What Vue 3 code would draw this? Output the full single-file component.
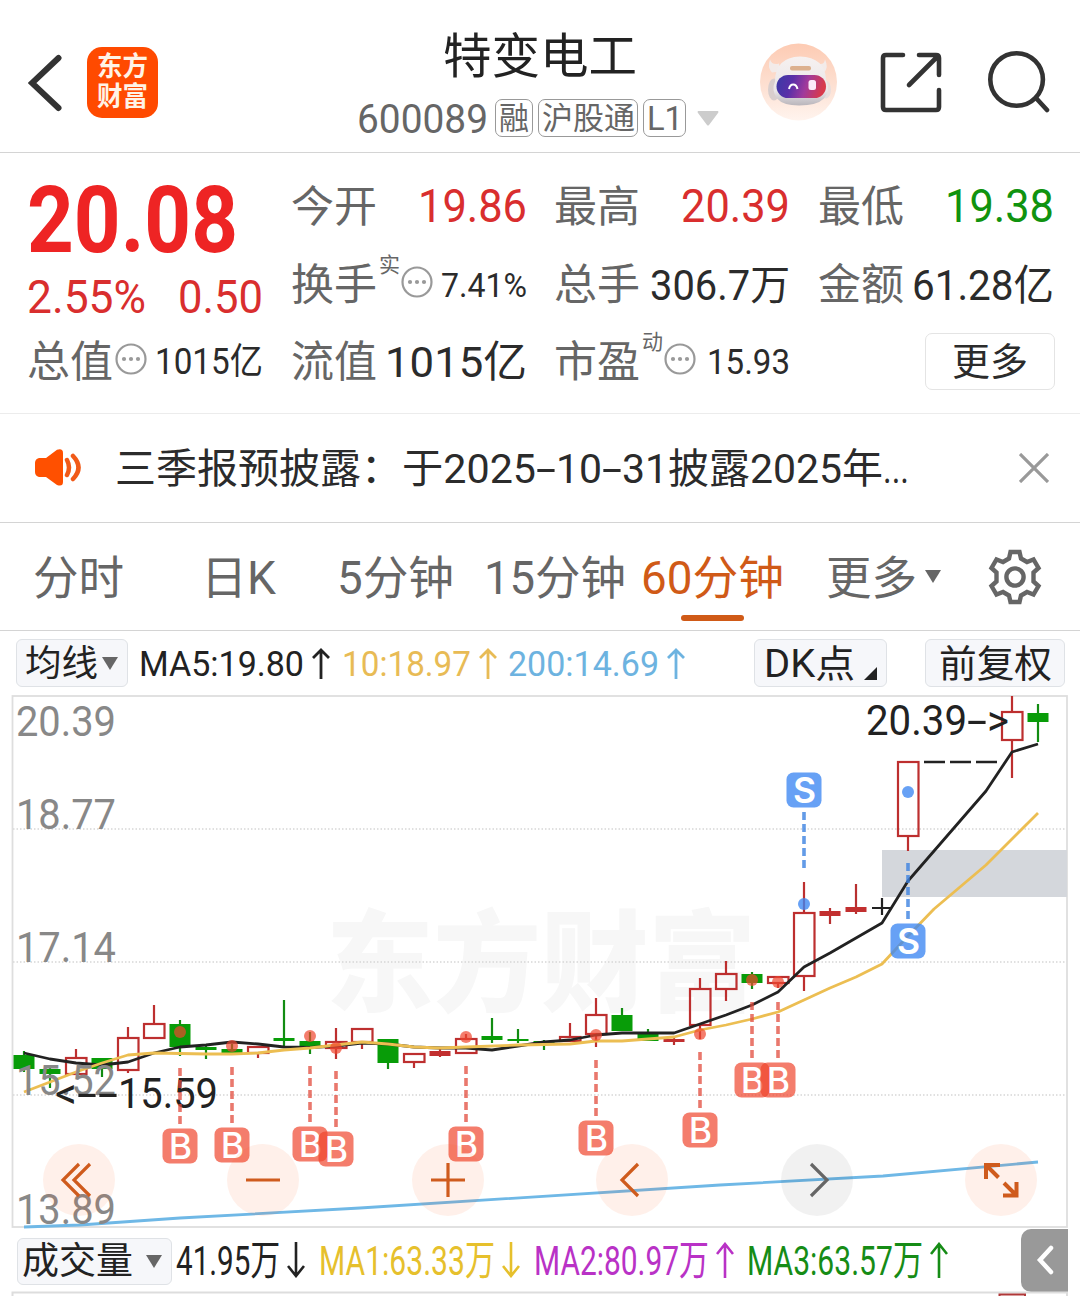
<template>
  <div class="stock-page">
    <header class="header">
      <svg class="back" width="34" height="58" viewBox="28 54 34 58">
        <path d="M58.500 58 L32 83 L58.500 108" fill="none" stroke="#333" stroke-width="6" stroke-linecap="round" />
      </svg>
      <div class="logo">
        <FitText text="东方" :w="51" :size="27" weight="700" />
        <FitText text="财富" :w="51" :size="27" weight="700" />
      </div>
      <div class="title">
        <FitText class="name" text="特变电工" :w="194" :size="48" />
        <div class="code-line">
          <FitText text="600089" :w="131" :size="41" />
          <span class="tag tag-rong"><FitText text="融" :w="30" :size="31" /></span>
          <span class="tag tag-hgt"><FitText text="沪股通" :w="93" :size="31" /></span>
          <span class="tag tag-l1"><FitText text="L1" :w="36" :size="33" /></span>
          <svg class="code-caret" width="22" height="15"><path d="M1 0 H21 Q22 1 21 2 L12 14 Q11 15 10 14 L1 2 Q0 1 1 0Z" fill="#ccc" /></svg>
        </div>
      </div>
      <svg class="robot" width="78" height="78" viewBox="760 43.500 78 78">
        <defs>
          <linearGradient id="peach" x1="0" y1="0" x2="0" y2="1">
            <stop offset="0" stop-color="#fdcbb3" />
            <stop offset=".55" stop-color="#fde0d2" />
            <stop offset="1" stop-color="#fff4ee" />
          </linearGradient>
          <linearGradient id="visor" x1="0" y1="0" x2="1" y2=".15">
            <stop offset="0" stop-color="#3a3aa6" />
            <stop offset=".35" stop-color="#5a2fa8" />
            <stop offset=".65" stop-color="#a03a9c" />
            <stop offset="1" stop-color="#d83a4c" />
          </linearGradient>
          <linearGradient id="shell" x1="0" y1="0" x2="0" y2="1">
            <stop offset="0" stop-color="#f6f1f0" />
            <stop offset=".7" stop-color="#eae6e8" />
            <stop offset="1" stop-color="#b9b5bb" />
          </linearGradient>
        </defs>
        <circle cx="798.500" cy="82.500" r="38.500" fill="url(#peach)" />
        <path d="M770 60 Q767 68 772 73 L780 72 L779 64 Q772 66 770 60Z M825 60 Q829 68 824 73 L815 71 L818 64 Q824 66 825 60Z" fill="#f3ebe9" />
        <ellipse cx="774" cy="90" rx="6" ry="11" fill="#d9cecd" />
        <ellipse cx="826" cy="90" rx="5" ry="9" fill="#e9dedd" />
        <path d="M775 82 Q775 58 800 57 Q825 58 826 80 Q831 91 824 99 Q817 106 799 106 Q783 106 777 99 Q771 91 775 82Z" fill="url(#shell)" />
        <rect x="790" y="66.500" width="21" height="4.500" rx="2" fill="#dcb08e" />
        <rect x="776.500" y="75.500" width="49.500" height="23" rx="11.500" fill="url(#visor)" />
        <path d="M789 89.500 Q790 85 793.200 85 Q796.500 85 797.500 89.500" fill="none" stroke="#fff" stroke-width="2" />
        <rect x="808.500" y="80.500" width="7.500" height="10" rx="2.500" fill="#fbe9fa" />
      </svg>
      <svg class="share" width="62" height="62" viewBox="880 52 62 62" fill="none" stroke="#333" stroke-width="4.600" stroke-linecap="round">
        <path d="M903 55 H886 Q883 55 883 58 V107 Q883 110 886 110 H936 Q939 110 939 107 V90 M919 55 H936 Q939 55 939 58 V75 M938 56 L909 85" />
      </svg>
      <svg class="search" width="64" height="64" viewBox="986 50 64 64" fill="none" stroke="#333" stroke-width="4.600" stroke-linecap="round">
        <circle cx="1016.600" cy="79.500" r="26.300" />
        <path d="M1036 98 L1047 110" />
      </svg>
    </header>

    <section class="quotes">
      <div class="col">
        <div class="line price-line"><FitText class="price" text="20.08" :w="211" :size="92" weight="700" /></div>
        <div class="line pct-line red">
          <FitText text="2.55%" :w="119" :size="46" />
          <FitText text="0.50" :w="85" :size="46" />
        </div>
        <QuoteLine :q="totalValue" />
      </div>
      <div v-for="(col, i) in quoteCols" :key="i" class="col">
        <QuoteLine v-for="q in col" :key="q.label" :q="q" />
        <button v-if="i === 2" class="more-btn"><FitText text="更多" :w="76" :size="38" /></button>
      </div>
    </section>

    <section class="notice">
      <svg width="48" height="40" viewBox="34 448 48 40">
        <path d="M39 458 H46 L57 449.800 Q63 448 63 453 V482 Q63 487 57 485 L46 477 H39 Q35 476 35 472 V463 Q35 459 39 458Z" fill="#ff5000" />
        <path d="M67 460 Q71 467.500 67 475 M73 456 Q84 467.500 73 479" fill="none" stroke="#f15a18" stroke-width="4.500" stroke-linecap="round" />
      </svg>
      <FitText class="notice-head" text="三季报预披露：" :w="287" :size="41" />
      <FitText text="于2025" :w="134" :size="41" />
      <FitText text="-" :w="20" :size="41" />
      <FitText text="10" :w="46" :size="41" />
      <FitText text="-" :w="20" :size="41" />
      <FitText text="31披露2025年" :w="261" :size="41" />
      <FitText text="..." :w="26" :size="41" />
      <svg class="close" width="30" height="30"><path d="M1 1 L29 29 M29 1 L1 29" stroke="#999" stroke-width="3.200" /></svg>
    </section>

    <nav class="tabs">
      <div v-for="t in tabs" :key="t.text" class="tab" :class="[t.cls, { active: t.active }]">
        <FitText :text="t.text" :w="t.w" :size="46" />
      </div>
      <svg class="tab-caret" width="16" height="13"><path d="M0 0H16L8 13Z" fill="#666" /></svg>
      <svg class="gear" width="54" height="56" viewBox="-27 -28 54 56" fill="none" stroke="#666" stroke-width="4.400">
        <path d="M-4.500 -25 H4.500 L6 -18.500 L12 -15 L18.500 -17.500 L23.500 -9 L18.500 -4.500 V4.500 L23.500 9 L18.500 17.500 L12 15 L6 18.500 L4.500 25 H-4.500 L-6 18.500 L-12 15 L-18.500 17.500 L-23.500 9 L-18.500 4.500 V-4.500 L-23.500 -9 L-18.500 -17.500 L-12 -15 L-6 -18.500Z" />
        <circle r="8.600" />
      </svg>
    </nav>

    <div class="legend">
      <button class="chip ma-chip">
        <FitText text="均线" :w="73" :size="36.5" />
        <svg width="16" height="13"><path d="M0 0H16L8 13Z" fill="#666" /></svg>
      </button>
      <div v-for="m in maLegend" :key="m.text" class="ma" :class="m.cls">
        <FitText :text="m.text" :w="m.w" :size="35" />
        <svg width="18" height="31"><path d="M9 31V2M1 10L9 2L17 10" fill="none" stroke="currentColor" stroke-width="2.800" /></svg>
      </div>
      <button class="chip dk-chip">
        <FitText text="DK点" :w="91" :size="38" />
        <svg width="13" height="13"><path d="M13 0V13H0Z" fill="#222" /></svg>
      </button>
      <button class="chip fq-chip"><FitText text="前复权" :w="113" :size="37.5" /></button>
    </div>

    <div class="chart">
      <svg width="1080" height="534" viewBox="0 695 1080 534">
        <text x="326" y="1003" class="watermark" textLength="430" lengthAdjust="spacingAndGlyphs">东方财富</text>
        <path d="M13 829H1067M13 962H1067M13 1095H1067" class="grid" />
        <rect x="12.500" y="696" width="1054.500" height="531" class="frame" />
        <rect x="882" y="850" width="185" height="47" fill="#d4d7dc" />

        <g v-for="c in candles" :key="c.x" :class="c.kind" stroke-width="2.200">
          <path v-if="c.kind === 'flat'" :d="`M${c.x - 10} ${c.o}H${c.x + 10}M${c.x} ${c.h}V${c.l}`" />
          <template v-else>
            <path :d="`M${c.x} ${c.h}V${c.o}M${c.x} ${c.c}V${c.l}`" />
            <rect v-if="c.kind === 'up'" :x="c.x - 10" :y="c.o + 1" width="20.500" :height="Math.max(c.c - c.o - 2, 1)" />
            <rect v-else :x="c.x - 10.5" :y="c.o" width="21" :height="c.c - c.o" stroke="none" />
          </template>
        </g>
        <path d="M924 762H945M950 762H971M976 762H997" stroke="#222" stroke-width="2.400" />

        <polyline :points="ma5" class="line" stroke="#222" />
        <polyline :points="ma10" class="line" stroke="#ecbe52" />
        <polyline :points="ma200" class="line" stroke="#6fb8e6" />

        <text v-for="l in yLabels" :key="l.t" x="16" :y="l.y" class="axis" textLength="100" lengthAdjust="spacingAndGlyphs">{{ l.t }}</text>

        <g class="extreme">
          <text x="866" y="734.500" textLength="101" lengthAdjust="spacingAndGlyphs">20.39</text>
          <text x="967" y="734.500" textLength="20" lengthAdjust="spacingAndGlyphs">-</text>
          <text x="987" y="734.500" textLength="22" lengthAdjust="spacingAndGlyphs">&gt;</text>
          <text x="55" y="1108" textLength="22" lengthAdjust="spacingAndGlyphs">&lt;</text>
          <text x="77" y="1108" textLength="20" lengthAdjust="spacingAndGlyphs">-</text>
          <text x="98" y="1108" textLength="20" lengthAdjust="spacingAndGlyphs">-</text>
          <text x="118" y="1108" textLength="100" lengthAdjust="spacingAndGlyphs">15.59</text>
        </g>

        <g v-for="m in marks" :key="m.x" :class="m.t === 'B' ? 'buy' : 'sell'">
          <circle :cx="m.x" :cy="m.dot" r="6" />
          <path :d="m.below ? `M${m.x} ${m.y + 22}v56` : `M${m.x} ${m.y - 78}v56`" class="stem" />
          <rect :x="m.x - 17.5" :y="m.y - 17.5" width="35" height="35" rx="7" />
          <text :x="m.x + 0.5" :y="m.y + 13">{{ m.t }}</text>
        </g>
      </svg>
      <div class="controls">
        <button v-for="b in controls" :key="b.id" :class="[b.id, { off: b.id === 'next' }]">
          <svg width="72" height="72" viewBox="-36 -36 72 72"><path :d="b.d" /></svg>
        </button>
      </div>
    </div>

    <div class="volume">
      <button class="chip vol-chip">
        <FitText text="成交量" :w="111" :size="37" />
        <svg width="16" height="13"><path d="M0 0H16L8 13Z" fill="#666" /></svg>
      </button>
      <div v-for="v in volLegend" :key="v.text" class="vol" :class="v.cls">
        <FitText :text="v.text" :w="v.w" :size="41" />
        <svg width="18" height="36">
          <path :d="v.up ? 'M9 36V2M1 12L9 2L17 12' : 'M9 0V34M1 24L9 34L17 24'" fill="none" stroke="currentColor" stroke-width="2.600" />
        </svg>
      </div>
      <button class="drawer">
        <svg width="18" height="30"><path d="M15 3L4 15L15 27" fill="none" stroke="#fff" stroke-width="4.500" stroke-linecap="round" /></svg>
      </button>
    </div>
    <svg class="vol-chart" width="1080" height="5" viewBox="0 1291 1080 5">
      <path d="M12.500 1296V1292.500H1067V1296" fill="none" stroke="#ddd" stroke-width="2" />
      <path d="M999.500 1296V1294.500H1025V1296" fill="none" stroke="#b03838" stroke-width="2" />
    </svg>
  </div>
</template>

<script setup>
import { h } from 'vue'

// 固定宽度的文字，底边就是基线
const FitText = (props) => {
  const height = Math.round(props.size * 0.72)
  return h('svg', { width: props.w, height, class: 'fit' }, [
    h('text', {
      x: 0,
      y: height - 0.5,
      textLength: props.w,
      lengthAdjust: 'spacingAndGlyphs',
      'font-size': props.size,
      'font-weight': props.weight || 400,
      fill: 'currentColor'
    }, props.text)
  ])
}
FitText.props = ['text', 'w', 'size', 'weight']

const dots = () => h('svg', { class: 'dots', width: 32, height: 32, viewBox: '0 0 32 32' }, [
  h('circle', { cx: 16, cy: 16, r: 14.5, fill: 'none', stroke: '#999', 'stroke-width': 2.2 }),
  ...[9, 16, 23].map((cx) => h('circle', { cx, cy: 16, r: 2.1, fill: '#999' }))
])

// 行情单元格：标签 + 上标 + 省略号 + 数值
const QuoteLine = ({ q }) => h('div', { class: 'line' }, [
  h(FitText, { text: q.label, w: 86, size: 43, class: 'label' }),
  q.sup ? h(FitText, { text: q.sup, w: 21, size: 21, class: 'sup' }) : null,
  q.tip ? dots() : null,
  h(FitText, { text: q.value, w: q.w, size: q.size, class: ['value', q.cls, { small: q.tip }] })
])
QuoteLine.props = ['q']

const totalValue = { label: '总值', tip: true, value: '1015亿', w: 108, size: 36 }
const quoteCols = [
  [
    { label: '今开', value: '19.86', w: 109, size: 47, cls: 'red' },
    { label: '换手', sup: '实', tip: true, value: '7.41%', w: 86, size: 34 },
    { label: '流值', value: '1015亿', w: 142, size: 43 }
  ],
  [
    { label: '最高', value: '20.39', w: 109, size: 47, cls: 'red' },
    { label: '总手', value: '306.7万', w: 140, size: 42 },
    { label: '市盈', sup: '动', tip: true, value: '15.93', w: 83, size: 35 }
  ],
  [
    { label: '最低', value: '19.38', w: 109, size: 47, cls: 'green' },
    { label: '金额', value: '61.28亿', w: 142, size: 42 }
  ]
]

const tabs = [
  { text: '分时', w: 91, cls: 't1' },
  { text: '日K', w: 75, cls: 't2' },
  { text: '5分钟', w: 117, cls: 't3' },
  { text: '15分钟', w: 142, cls: 't4' },
  { text: '60分钟', w: 143, cls: 't5', active: true },
  { text: '更多', w: 91, cls: 't6' }
]

const maLegend = [
  { text: 'MA5:19.80', w: 165, cls: 'm5' },
  { text: '10:18.97', w: 129, cls: 'm10' },
  { text: '200:14.69', w: 151, cls: 'm200' }
]

const volLegend = [
  { text: '41.95万', w: 104, cls: 'v0', up: false },
  { text: 'MA1:63.33万', w: 176, cls: 'v1', up: false },
  { text: 'MA2:80.97万', w: 175, cls: 'v2', up: true },
  { text: 'MA3:63.57万', w: 176, cls: 'v3', up: true }
]

const yLabels = [
  { t: '20.39', y: 736 },
  { t: '18.77', y: 829 },
  { t: '17.14', y: 962 },
  { t: '15.52', y: 1095 },
  { t: '13.89', y: 1224 }
]

// [x, 最高, 实体上沿, 实体下沿, 最低, 类型]
const candles = [
  [24, 1051, 1055, 1069, 1072, 'down'],
  [50, 1068, 1069, 1074, 1088, 'down'],
  [76, 1049, 1057, 1075, 1075, 'up'],
  [102, 1058, 1058, 1069, 1077, 'down'],
  [128, 1027, 1037, 1071, 1073, 'up'],
  [154, 1005, 1023, 1039, 1039, 'up'],
  [180, 1020, 1024, 1047, 1056, 'down'],
  [206, 1045, 1047, 1050, 1059, 'down'],
  [232, 1044, 1049, 1053, 1055, 'down'],
  [258, 1046, 1046, 1054, 1058, 'up'],
  [284, 1000, 1038, 1041, 1047, 'down'],
  [310, 1032, 1041, 1047, 1054, 'down'],
  [336, 1028, 1041, 1049, 1059, 'up'],
  [362, 1028, 1028, 1043, 1049, 'up'],
  [388, 1039, 1039, 1063, 1069, 'down'],
  [414, 1053, 1053, 1063, 1068, 'up'],
  [440, 1049, 1051, 1056, 1057, 'fill'],
  [466, 1034, 1038, 1054, 1054, 'up'],
  [492, 1018, 1036, 1040, 1043, 'down'],
  [518, 1029, 1039, 1041, 1043, 'down'],
  [544, 1040, 1041, 1044, 1050, 'down'],
  [570, 1023, 1036, 1042, 1042, 'up'],
  [596, 998, 1014, 1035, 1047, 'up'],
  [622, 1008, 1015, 1031, 1031, 'down'],
  [648, 1029, 1033, 1041, 1041, 'down'],
  [674, 1038, 1039, 1042, 1045, 'fill'],
  [700, 978, 988, 1026, 1039, 'up'],
  [726, 961, 973, 990, 1001, 'up'],
  [752, 972, 974, 983, 989, 'down'],
  [778, 976, 976, 984, 988, 'up'],
  [804, 882, 912, 977, 991, 'up'],
  [830, 908, 911, 916, 924, 'fill'],
  [856, 884, 907, 912, 914, 'fill'],
  [882, 898, 908, 908, 915, 'flat'],
  [908, 761, 761, 837, 851, 'up'],
  [1012, 696, 711, 741, 778, 'up'],
  [1038, 704, 713, 722, 742, 'down']
].map(([x, hi, o, c, l, kind]) => ({ x, h: hi, o, c, l, kind }))

const ma5 = '24,1053 50,1059 76,1063 102,1065 128,1062 154,1053 180,1047 206,1045 232,1042 258,1044 284,1047 310,1047.5 336,1046 362,1043 388,1044 414,1047 440,1048 466,1048 492,1050 518,1046 544,1042 570,1040 596,1035 622,1033 674,1033 700,1024 726,1015 752,1005 778,992 804,967 830,953 856,938 882,923 908,881 986,791 1012,752 1038,744'
const ma10 = '24,1092 50,1082 76,1072 102,1063 128,1055 154,1053 206,1054 232,1054 258,1053 284,1050 310,1048 336,1045 362,1042 388,1044 414,1047 440,1048 466,1047 518,1045 570,1044 596,1041 622,1041 648,1039 674,1037 700,1030 726,1025 752,1019 778,1012 804,1000 830,988 856,977 882,964 908,936 934,909 986,865 1038,813'
const ma200 = '24,1227 80,1225 180,1218 360,1208 720,1185 883,1176 1038,1162'

const marks = [
  { t: 'B', x: 180, y: 1146, dot: 1032 },
  { t: 'B', x: 232, y: 1145, dot: 1046 },
  { t: 'B', x: 310, y: 1144, dot: 1036 },
  { t: 'B', x: 336, y: 1149, dot: 1048 },
  { t: 'B', x: 466, y: 1144, dot: 1037 },
  { t: 'B', x: 596, y: 1138, dot: 1035 },
  { t: 'B', x: 700, y: 1130, dot: 1034 },
  { t: 'B', x: 752, y: 1080, dot: 980 },
  { t: 'B', x: 778, y: 1080, dot: 982 },
  { t: 'S', x: 804, y: 790, dot: 904, below: true },
  { t: 'S', x: 908, y: 941, dot: 792 }
]

const controls = [
  { id: 'first', d: 'M0 -16L-16 0L0 16M11 -16L-5 0L11 16' },
  { id: 'minus', d: 'M-17 0H17' },
  { id: 'plus', d: 'M-17 0H17M0 -17V17' },
  { id: 'prev', d: 'M6 -16L-10 0L6 16' },
  { id: 'next', d: 'M-6 -16L10 0L-6 16' },
  { id: 'full', d: 'M-1 -15H-15V-1M-15 -15L-2.500 -2.500M2 15.500H15.500V2M15.500 15.500L3 3' }
]
</script>

<style>
body {
  background: #fff;
}

.fit {
  display: block;
  flex: none;
  overflow: visible;
}

.line {
  display: flex;
  align-items: flex-end;
  height: 41px;
  margin-bottom: 36.5px;
}

.line .label {
  color: #666;
}

.line .sup {
  color: #666;
  margin: 0 -1px 28px 2px;
}

.line .dots {
  flex: none;
  margin: 0 0 2px 2px;
}

.line .value {
  margin-left: auto;
}

.line .value.small {
  margin-bottom: 3px;
}

.red {
  color: #d92e2e;
}

.green {
  color: #10930f;
}
</style>

<style scoped>
.stock-page {
  width: 1080px;
  height: 1296px;
  overflow: hidden;
  background: #fff;
  color: #2b2b2b;
  font-family: Roboto, "Noto Sans CJK SC", sans-serif;
}

button {
  padding: 0;
  margin: 0;
  border: none;
  background: none;
  font-family: inherit;
  color: inherit;
  box-sizing: border-box;
}

.stock-page svg {
  display: block;
  flex: none;
}

.header {
  display: flex;
  align-items: flex-start;
  height: 152px;
  border-bottom: 1px solid #d4d4d4;
}

.back {
  margin: 54px 0 0 28px;
}

.logo {
  display: flex;
  flex-direction: column;
  align-items: center;
  gap: 11px;
  box-sizing: border-box;
  width: 71px;
  height: 71px;
  margin: 47px 0 0 25px;
  padding-top: 10px;
  border-radius: 15px;
  background: #ff4a00;
  color: #fff3e6;
}

.title {
  width: 362px;
  margin: 38px 0 0 200px;
  color: #222;
}

.name {
  margin-left: 85px;
}

.code-line {
  display: flex;
  align-items: center;
  height: 38px;
  margin-top: 26px;
  margin-left: -1px;
  color: #666;
}

.tag {
  display: flex;
  align-items: center;
  justify-content: center;
  box-sizing: border-box;
  height: 38px;
  border: 1.500px solid #999;
  border-radius: 7px;
}

.tag-rong {
  width: 38px;
  margin-left: 7px;
}

.tag-hgt {
  width: 100px;
  margin-left: 5px;
}

.tag-l1 {
  width: 43px;
  margin-left: 5px;
}

.code-caret {
  margin-left: 11px;
}

.robot {
  margin: 43px 0 0 40px;
}

.share {
  margin: 52px 0 0 42px;
}

.search {
  margin: 50px 0 0 44px;
}

.quotes {
  display: grid;
  grid-template-columns: repeat(4, 236px);
  column-gap: 27.5px;
  box-sizing: border-box;
  height: 261px;
  padding: 28px 0 0 27px;
  border-bottom: 1px solid #ececec;
}

.quotes .line.price-line {
  height: 71px;
  margin-bottom: 0;
}

.quotes .line.pct-line {
  justify-content: space-between;
  height: 61px;
  margin-bottom: 23px;
}

.price {
  color: #ee2424;
}

.more-btn {
  display: flex;
  align-items: center;
  justify-content: center;
  width: 130px;
  height: 57px;
  margin: -3px 0 0 107px;
  border: 1.500px solid #e4e4e4;
  border-radius: 7px;
}

.notice {
  display: flex;
  align-items: center;
  box-sizing: border-box;
  height: 109px;
  padding-left: 34px;
  border-bottom: 1px solid #d4d4d4;
}

.notice-head {
  margin-left: 33px;
}

.close {
  margin-left: 110px;
}

.tabs {
  display: flex;
  align-items: center;
  box-sizing: border-box;
  height: 108px;
  border-bottom: 1px solid #d4d4d4;
  color: #666;
}

.tab {
  position: relative;
  top: 0.5px;
}

.t1 { margin-left: 33px; }
.t2 { margin-left: 77px; }
.t3 { margin-left: 61px; }
.t4 { margin-left: 30px; }
.t5 { margin-left: 15px; }
.t6 { margin-left: 42px; }

.tab.active {
  color: #d05a17;
}

.tab.active::after {
  content: '';
  position: absolute;
  left: 40px;
  bottom: -27px;
  width: 63px;
  height: 6px;
  border-radius: 3px;
  background: #d05a17;
}

.tab-caret {
  margin-left: 8px;
}

.gear {
  margin-left: 47px;
}

.legend,
.volume {
  display: flex;
  align-items: center;
  color: #222;
}

.legend {
  height: 64px;
}

.chip {
  display: flex;
  align-items: center;
  justify-content: center;
  height: 48px;
  border: 1.500px solid #dfe2e6;
  border-radius: 6px;
  background: #f6f7fa;
}

.ma-chip {
  width: 112px;
  gap: 4px;
  margin-left: 16px;
  padding-right: 2px;
}

.ma {
  display: flex;
  align-items: center;
  gap: 8px;
}

.m5 { margin-left: 11px; }
.m10 { margin-left: 12px; color: #e8bb55; }
.m200 { margin-left: 11px; color: #6db3e0; }

.dk-chip {
  width: 133px;
  gap: 9px;
  margin-left: 69px;
}

.dk-chip svg:last-child {
  margin-top: 21px;
}

.fq-chip {
  width: 140px;
  margin-left: 38px;
}

.chart {
  position: relative;
  height: 534px;
}

.watermark {
  font-size: 110px;
  font-weight: 900;
  fill: #f7f7f7;
}

.grid {
  stroke: #d6d6d6;
  stroke-width: 1.500;
  stroke-dasharray: 1.500 2;
}

.frame {
  fill: none;
  stroke: #dedede;
  stroke-width: 1.800;
}

.up {
  fill: none;
  stroke: #bd2f2f;
}

.fill {
  fill: #c22f2f;
  stroke: #b83030;
}

.down {
  fill: #089c08;
  stroke: #128c12;
}

.flat {
  stroke: #222;
}

polyline.line {
  fill: none;
  stroke-width: 2.800;
  stroke-linejoin: round;
}

.axis {
  font-size: 42px;
  fill: #888;
}

.extreme text {
  font-size: 42px;
  fill: #222;
}

.buy {
  fill: rgba(240, 70, 45, 0.7);
  stroke: none;
}

.sell {
  fill: rgba(60, 135, 242, 0.78);
}

.stem {
  fill: none;
  stroke-width: 3.600;
  stroke-dasharray: 8 4;
}

.buy .stem {
  stroke: rgba(225, 75, 60, 0.75);
}

.sell .stem {
  stroke: rgba(60, 130, 225, 0.8);
}

.buy text,
.sell text {
  font-family: Inter, "Liberation Sans", sans-serif;
  font-size: 35.5px;
  font-weight: 500;
  text-anchor: middle;
  fill: #fff;
}

.sell text {
  font-weight: 600;
}

.controls {
  position: absolute;
  top: 449px;
  left: 43px;
  right: 43px;
  display: flex;
  justify-content: space-between;
}

.controls button {
  width: 72px;
  height: 72px;
  border-radius: 50%;
  background: rgba(255, 90, 20, 0.09);
}

.controls button.off {
  background: rgba(0, 0, 0, 0.055);
}

.controls path {
  fill: none;
  stroke: #cf5b1d;
  stroke-width: 3.200;
}

.controls .full path {
  stroke-width: 4;
}

.controls .off path {
  stroke: #666;
}

.volume {
  height: 62px;
}

.vol-chip {
  width: 155px;
  height: 47px;
  gap: 13px;
  margin: 2px 0 0 17px;
  padding-right: 5px;
}

.vol-chip svg:first-child {
  margin-top: -1px;
}

.vol {
  display: flex;
  align-items: center;
  gap: 7px;
  margin-top: -1px;
}

.v0 { margin-left: 4px; }
.v1 { margin-left: 14px; color: #e6c02c; }
.v2 { margin-left: 14px; color: #b932c6; }
.v3 { margin-left: 13px; color: #168c16; }

.drawer {
  display: flex;
  align-items: center;
  padding-left: 15px;
  width: 47px;
  height: 63px;
  margin-left: 73px;
  border-radius: 10px 0 0 10px;
  background: #999;
}
</style>
